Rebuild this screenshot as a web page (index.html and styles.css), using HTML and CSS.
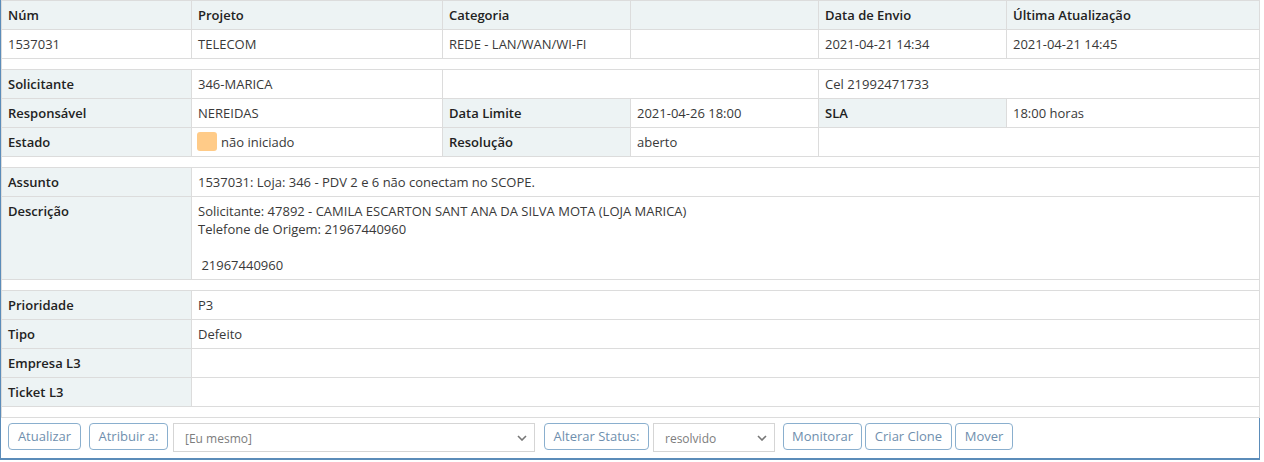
FILE: index.html
```html
<!DOCTYPE html>
<html lang="pt-BR">
<head>
<meta charset="utf-8">
<title>Chamado 1537031</title>
<link rel="stylesheet" href="styles.css">
</head>
<body>
<div class="widget">
  <table class="details">
    <colgroup>
      <col class="c1"><col class="c2"><col class="c3"><col class="c4"><col class="c5"><col class="c6">
    </colgroup>
    <thead>
      <tr>
        <th>Núm</th><th>Projeto</th><th>Categoria</th><th></th><th>Data de Envio</th><th>Última Atualização</th>
      </tr>
    </thead>
    <tbody>
      <tr>
        <td>1537031</td><td>TELECOM</td><td>REDE - LAN/WAN/WI-FI</td><td></td><td>2021-04-21 14:34</td><td>2021-04-21 14:45</td>
      </tr>
      <tr class="spacer"><td colspan="6"></td></tr>
      <tr>
        <th>Solicitante</th><td>346-MARICA</td><td colspan="2"></td><td colspan="2">Cel 21992471733</td>
      </tr>
      <tr>
        <th>Responsável</th><td>NEREIDAS</td><th>Data Limite</th><td>2021-04-26 18:00</td><th>SLA</th><td>18:00 horas</td>
      </tr>
      <tr>
        <th>Estado</th>
        <td><span class="swatch"></span>não iniciado</td>
        <th>Resolução</th><td>aberto</td><td colspan="2"></td>
      </tr>
      <tr class="spacer"><td colspan="6"></td></tr>
      <tr>
        <th>Assunto</th><td colspan="5">1537031: Loja: 346 - PDV 2 e 6 não conectam no SCOPE.</td>
      </tr>
      <tr>
        <th>Descrição</th>
        <td colspan="5">Solicitante: 47892 - CAMILA ESCARTON SANT ANA DA SILVA MOTA (LOJA MARICA)<br>Telefone de Origem: 21967440960<br><br>&nbsp;21967440960</td>
      </tr>
      <tr class="spacer"><td colspan="6"></td></tr>
      <tr><th>Prioridade</th><td colspan="5">P3</td></tr>
      <tr><th>Tipo</th><td colspan="5">Defeito</td></tr>
      <tr><th>Empresa L3</th><td colspan="5"></td></tr>
      <tr><th>Ticket L3</th><td colspan="5"></td></tr>
      <tr class="spacer"><td colspan="6"></td></tr>
    </tbody>
  </table>
  <div class="toolbox">
    <button class="btn btn-update" type="button">Atualizar</button>
    <button class="btn btn-assign" type="button">Atribuir a:</button>
    <select class="sel sel-assign"><option>[Eu mesmo]</option></select>
    <button class="btn btn-status" type="button">Alterar Status:</button>
    <select class="sel sel-status"><option>resolvido</option></select>
    <button class="btn btn-monitor" type="button">Monitorar</button>
    <button class="btn btn-clone" type="button">Criar Clone</button>
    <button class="btn btn-move" type="button">Mover</button>
  </div>
</div>
</body>
</html>
```

FILE: styles.css
```css
* { box-sizing: border-box; }

html, body {
  margin: 0;
  background: #fff;
}

body {
  font-family: "Open Sans", "Liberation Sans", sans-serif;
  font-size: 13px;
  line-height: 18px;
  color: #393939;
}

.widget {
  width: 1260px;
  border: 1px solid #5b8cb9;
  border-top: 0;
  border-bottom-width: 2px;
}

.details {
  width: 100%;
  border-collapse: collapse;
  table-layout: fixed;
}

.c1 { width: 190px; }
.c2 { width: 251px; }
.c3 { width: 188px; }
.c4 { width: 188px; }
.c5 { width: 188px; }
.c6 { width: 253px; }

.details th,
.details td {
  border: 1px solid #dcdcdc;
  padding: 5px 6px;
  text-align: left;
  vertical-align: top;
}

.details th {
  background: #edf3f4;
  color: #222;
  font-weight: 600;
}

.details .spacer td {
  height: 11px;
  padding: 0;
}

.swatch {
  display: inline-block;
  vertical-align: top;
  width: 20px;
  height: 19px;
  margin: -1px 4px -1px -1px;
  border-radius: 3px;
  background: #ffcb88;
}

.toolbox {
  display: flex;
  align-items: flex-start;
  height: 40px;
  padding: 5px 7px 0;
}

.btn {
  height: 27px;
  padding: 0;
  border: 1px solid #8aafce;
  border-radius: 4px;
  background: #fff;
  color: #6f8fae;
  font-family: "Open Sans", "Liberation Sans", sans-serif;
  font-size: 13px;
  line-height: 25px;
  text-align: center;
  cursor: pointer;
}

.sel {
  height: 29px;
  padding: 2px 24px 0 11px;
  border: 1px solid #d5d5d5;
  border-radius: 0;
  background: #fff url("data:image/svg+xml;utf8,<svg xmlns='http://www.w3.org/2000/svg' width='10' height='6' viewBox='0 0 10 6'><path d='M1 1l4 4 4-4' fill='none' stroke='%23777' stroke-width='1.6'/></svg>") no-repeat right 7px center;
  color: #7d7d7d;
  font-family: "Open Sans", "Liberation Sans", sans-serif;
  font-size: 12px;
  -webkit-appearance: none;
  appearance: none;
}

.btn-update { width: 73px; margin-right: 8px; }
.btn-assign { width: 79px; margin-right: 5px; }
.sel-assign { width: 362px; margin-right: 9px; }
.btn-status { width: 105px; margin-right: 4px; }
.sel-status { width: 122px; margin-right: 8px; }
.btn-monitor { width: 79px; margin-right: 3px; }
.btn-clone { width: 87px; margin-right: 3px; }
.btn-move { width: 58px; }
```
